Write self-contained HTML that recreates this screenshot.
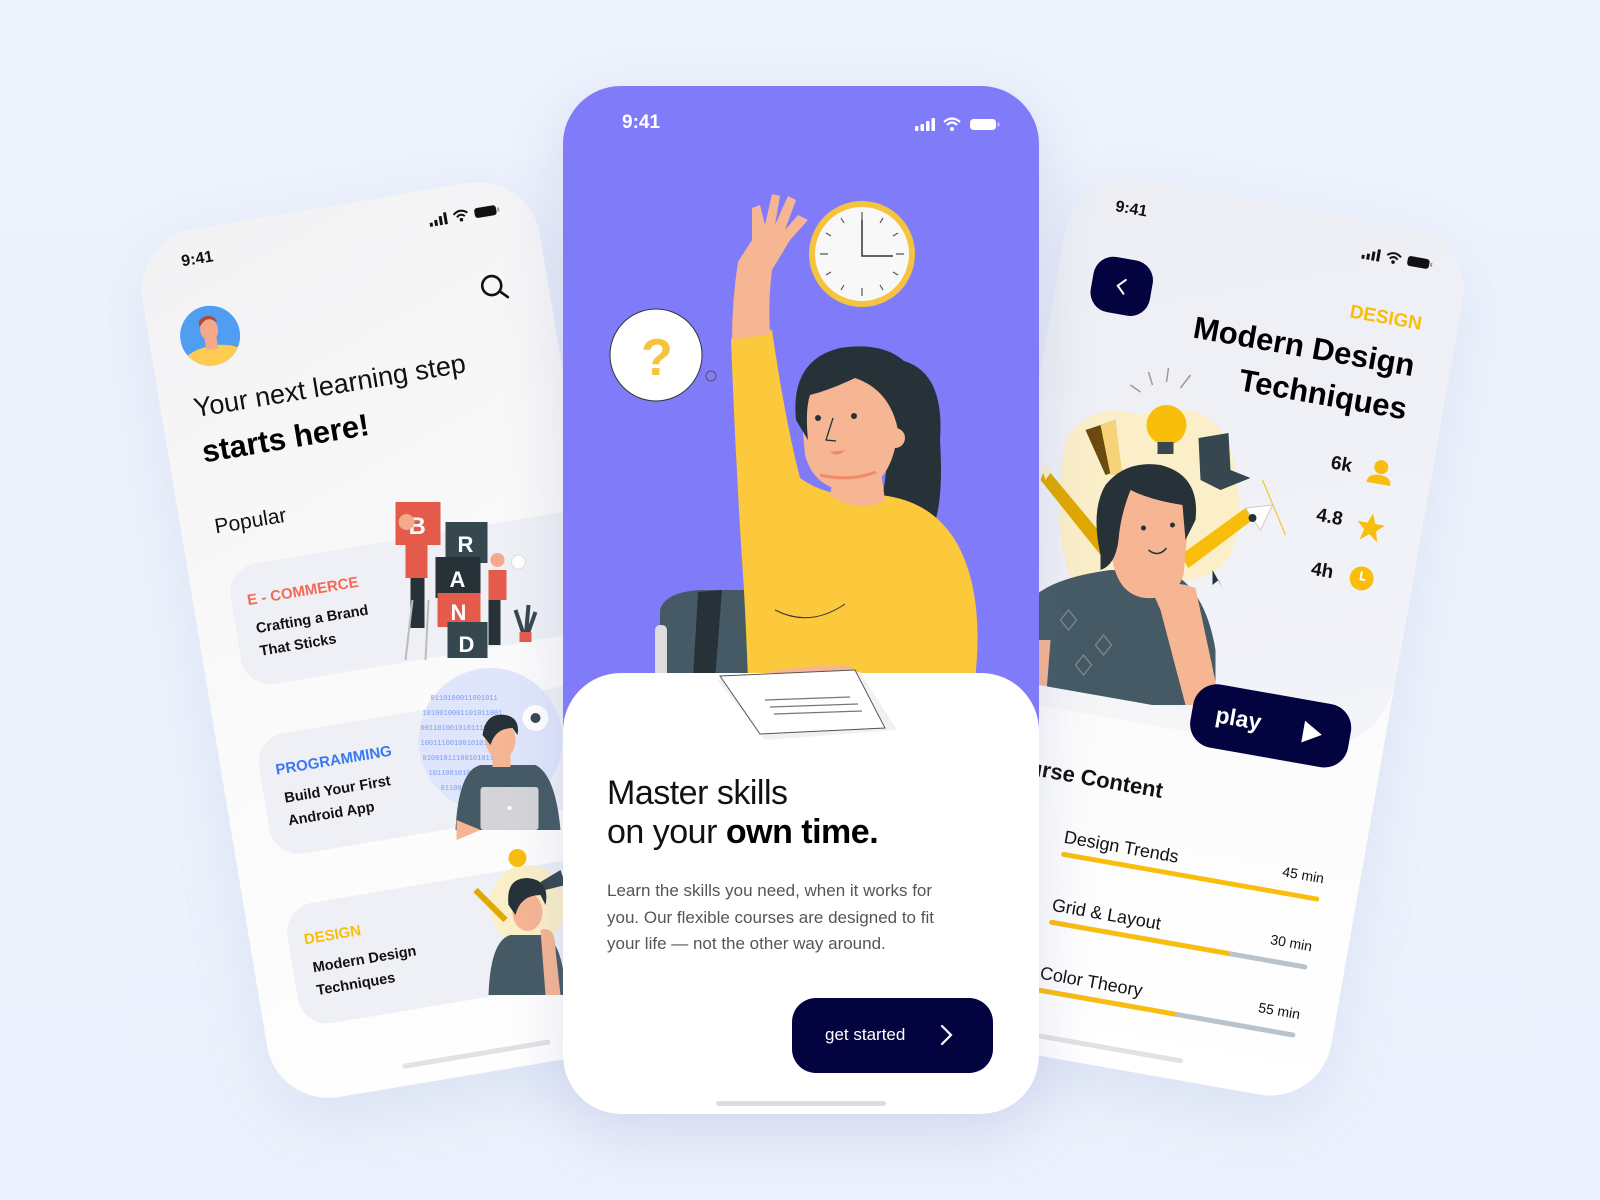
<!DOCTYPE html>
<html><head><meta charset="utf-8"><style>
*{margin:0;padding:0;box-sizing:border-box}
body{width:1600px;height:1200px;overflow:hidden;background:linear-gradient(180deg,#edf2fc 0%,#ebf1fc 100%);font-family:"Liberation Sans",sans-serif;position:relative}
.ph{position:absolute;width:403px;height:880px;border-radius:62px;overflow:hidden;box-shadow:0 20px 60px rgba(120,140,190,.15)}
.abs{position:absolute;white-space:nowrap;line-height:1}
.card{position:absolute;left:38px;width:380px;height:122px;border-radius:30px;background:#eef0f5}
.lab{position:absolute;left:16px;top:28px;font-size:15px;font-weight:bold;line-height:1}
.tt{position:absolute;left:20px;top:54px;font-size:14.5px;font-weight:bold;line-height:23px;color:#111}
.bar{position:absolute;left:104px;width:262px;height:5px;border-radius:3px;background:#b9c3cb;overflow:hidden}
.bar i{display:block;height:100%;background:#f9bd0c}
</style></head><body>

<!-- LEFT PHONE -->
<div class="ph" style="left:201.5px;top:200px;transform:rotate(-9.5deg);background:linear-gradient(160deg,#f2f2f4 0%,#fafafa 50%,#fff 100%)">
  <div class="abs" style="left:45px;top:23px;font-size:16px;font-weight:bold;color:#111">9:41</div>
  <svg class="abs" style="left:296px;top:24px" width="72" height="14" viewBox="0 0 72 14">
    <rect x="0" y="9" width="3" height="4" fill="#111"/><rect x="5" y="7" width="3" height="6" fill="#111"/><rect x="10" y="4" width="3" height="9" fill="#111"/><rect x="15" y="1" width="3" height="12" fill="#111"/>
    <path d="M25 5 Q32 -1 39 5 M28 8 Q32 4 36 8" stroke="#111" stroke-width="2" fill="none"/><circle cx="32" cy="11" r="1.8" fill="#111"/>
    <rect x="46" y="2" width="22" height="10" rx="3" fill="#111"/><rect x="69" y="5" width="2" height="4" fill="#999"/>
  </svg>
  <svg class="abs" style="left:31px;top:78px" width="60" height="60" viewBox="0 0 60 60">
    <clipPath id="av"><circle cx="30" cy="30" r="30"/></clipPath>
    <g clip-path="url(#av)"><rect width="60" height="60" fill="#4f9ef2"/><ellipse cx="30" cy="60" rx="36" ry="20" fill="#fccb4f"/>
    <rect x="24" y="30" width="12" height="14" fill="#f3a98a"/><ellipse cx="30" cy="24" rx="9" ry="11" fill="#f3a98a"/><path d="M21 20 Q30 8 39 18 L38 14 Q30 6 21 14Z" fill="#b5472f"/></g>
  </svg>
  <svg class="abs" style="left:334px;top:92px" width="30" height="30" viewBox="0 0 30 30"><circle cx="13" cy="13" r="9.5" stroke="#111" stroke-width="2.6" fill="none"/><path d="M20 20 L27 27" stroke="#111" stroke-width="2.6" stroke-linecap="round"/></svg>
  <div class="abs" style="left:33px;top:164px;font-size:27px;color:#111">Your next learning step</div>
  <div class="abs" style="left:34px;top:206px;font-size:31px;font-weight:bold;color:#000">starts here!</div>
  <div class="abs" style="left:34px;top:287px;font-size:21px;color:#111">Popular</div>
  <div class="card" style="top:340px"><div class="lab" style="color:#f26a58">E - COMMERCE</div><div class="tt">Crafting a Brand<br>That Sticks</div></div>
  <div class="card" style="top:512px"><div class="lab" style="color:#3a78f2">PROGRAMMING</div><div class="tt">Build Your First<br>Android App</div></div>
  <div class="card" style="top:684px"><div class="lab" style="color:#f9bd0c">DESIGN</div><div class="tt">Modern Design<br>Techniques</div></div>
  <div style="position:absolute;left:0;top:0;width:403px;height:880px;transform:rotate(9.5deg)">
    <svg width="403" height="880" viewBox="201.5 200 403 880" style="position:absolute;left:0;top:0">
      <rect x="395" y="502" width="45" height="43" fill="#e45b4b"/><text x="408" y="534" font-size="24" font-weight="bold" fill="#fff" font-family="Liberation Sans">B</text>
      <rect x="445" y="522" width="42" height="41" fill="#37474f"/><text x="457" y="552" font-size="22" font-weight="bold" fill="#fff" font-family="Liberation Sans">R</text>
      <rect x="435" y="557" width="45" height="41" fill="#263238"/><text x="449" y="587" font-size="22" font-weight="bold" fill="#fff" font-family="Liberation Sans">A</text>
      <rect x="437" y="593" width="43" height="34" fill="#e45b4b"/><text x="450" y="620" font-size="22" font-weight="bold" fill="#fff" font-family="Liberation Sans">N</text>
      <rect x="447" y="622" width="40" height="36" fill="#37474f"/><text x="458" y="652" font-size="22" font-weight="bold" fill="#fff" font-family="Liberation Sans">D</text>
      <rect x="405" y="538" width="22" height="40" fill="#e45b4b"/><rect x="410" y="578" width="14" height="50" fill="#263238"/><circle cx="406" cy="522" r="8" fill="#f3a98a"/>
      <path d="M412 600 L405 660 M428 600 L425 660" stroke="#bbb" stroke-width="2"/>
      <rect x="488" y="570" width="18" height="30" fill="#e45b4b"/><rect x="488" y="600" width="12" height="45" fill="#263238"/><circle cx="497" cy="560" r="7" fill="#f3a98a"/>
      <circle cx="518" cy="562" r="7" fill="#fff" stroke="#ddd"/>
      <path d="M525 640 L515 610 M525 640 L528 605 M525 640 L535 612" stroke="#37474f" stroke-width="4"/><rect x="519" y="632" width="12" height="10" fill="#e45b4b"/>
      <circle cx="490" cy="740" r="72" fill="#dfe6fb"/>
      <g font-size="7" fill="#7a9cf0" font-family="Liberation Mono"><text x="430" y="700">0110100011001011</text><text x="422" y="715">1010010001101011001</text><text x="420" y="730">00110100101011100101</text><text x="420" y="745">10011100100101010011</text><text x="422" y="760">0100101110010101101</text><text x="428" y="775">101100101001011001</text><text x="440" y="790">0110010100110</text></g>
      <circle cx="535" cy="718" r="13" fill="#fff"/><circle cx="535" cy="718" r="5" fill="#37474f"/>
      <path d="M455 830 Q458 770 480 765 L535 765 Q555 775 560 830Z" fill="#455a64"/>
      <rect x="492" y="745" width="18" height="22" fill="#f6b593"/><ellipse cx="500" cy="740" rx="15" ry="19" fill="#f6b593"/><path d="M482 735 Q485 712 505 715 Q520 718 517 735 L512 728 Q495 728 490 745Z" fill="#263238"/>
      <rect x="480" y="787" width="58" height="43" rx="3" fill="#d4d4d8"/><circle cx="509" cy="808" r="2" fill="#fff"/>
      <path d="M456 820 L480 830 L456 840Z" fill="#f6b593"/>
      <ellipse cx="527" cy="905" rx="38" ry="40" fill="#fbefc9"/><circle cx="517" cy="858" r="9" fill="#f9bd0c"/>
      <path d="M475 890 L505 920" stroke="#e0a800" stroke-width="6"/>
      <path d="M540 882 L560 870 L565 885 L545 890Z" fill="#37474f"/>
      <path d="M488 995 Q490 940 510 935 L545 935 Q563 945 565 995Z" fill="#455a64"/>
      <ellipse cx="527" cy="912" rx="15" ry="19" fill="#f6b593"/><path d="M508 905 Q505 878 527 878 Q550 880 545 905 L540 895 Q520 895 515 915Z" fill="#263238"/>
      <path d="M540 930 Q555 925 555 950 L560 995 L545 995Z" fill="#f6b593"/>
    </svg>
  </div>
  <div style="position:absolute;left:130px;top:858px;width:150px;height:5px;border-radius:3px;background:#e2e2e4"></div>
</div>

<!-- RIGHT PHONE -->
<div class="ph" style="left:996.5px;top:197px;transform:rotate(10deg);background:linear-gradient(180deg,#f6f6f8,#fff)">
  <div style="position:absolute;left:0;top:0;width:403px;height:530px;background:linear-gradient(160deg,#eceef4,#f3f4f9);border-bottom-right-radius:80px"></div>
  <div style="position:absolute;left:0;top:0;width:403px;height:880px;transform:rotate(-10deg)">
    <svg width="403" height="880" viewBox="996.5 197 403 880" style="position:absolute;left:0;top:0">
      <path d="M1065 440 Q1090 400 1140 415 Q1200 395 1228 440 Q1245 500 1235 540 Q1225 580 1180 580 L1070 580 Q1050 520 1065 440Z" fill="#fbefc9"/>
      <path d="M1152 385 L1148 372 M1166 382 L1168 368 M1180 388 L1190 375 M1140 392 L1130 385" stroke="#999" stroke-width="1.5"/>
      <circle cx="1166" cy="425" r="20" fill="#f9bd0c"/><rect x="1157" y="442" width="16" height="12" fill="#37474f"/>
      <path d="M1085 430 L1115 420 L1120 470 L1105 475Z" fill="#6b4b10"/><path d="M1100 425 L1115 420 L1122 475 L1110 475Z" fill="#f6d37a"/>
      <path d="M1198 438 L1228 433 L1230 470 L1250 478 L1220 490 L1200 480Z" fill="#37474f"/>
      <path d="M1045 467 L1110 545 L1100 555 L1040 480Z" fill="#e0a800"/><path d="M1040 465 L1052 470 L1045 480Z" fill="#fbefc9"/>
      <path d="M1180 555 L1245 508 L1252 520 L1188 568Z" fill="#f9bd0c"/><path d="M1245 508 L1272 505 L1260 530Z" fill="#fff" stroke="#ccc"/><circle cx="1252" cy="518" r="4" fill="#263238"/>
      <path d="M1262 480 L1285 535" stroke="#f9bd0c" stroke-width="1"/>
      <path d="M1212 570 L1212 585 L1218 580 L1222 588 Z" fill="#263238"/>
      <path d="M1030 705 L1030 600 Q1050 578 1110 570 L1170 572 Q1205 590 1215 650 L1215 705Z" fill="#455a64"/>
      <path d="M1060 620 l8 -10 l8 10 l-8 10z M1095 645 l8 -10 l8 10 l-8 10z M1075 665 l8 -10 l8 10 l-8 10z M1180 620 l8 -10 l8 10 l-8 10z" stroke="#7a8b93" fill="none" stroke-width="1.3"/>
      <rect x="1130" y="560" width="30" height="30" fill="#f6b593"/>
      <path d="M1108 495 Q1110 480 1150 482 Q1190 486 1188 520 L1183 575 Q1175 600 1145 598 Q1118 595 1112 560Z" fill="#f6b593"/>
      <path d="M1100 555 Q1090 510 1105 485 Q1125 460 1160 465 Q1200 475 1195 520 L1185 540 L1182 505 Q1150 500 1130 490 Q1120 515 1118 540 Q1115 565 1100 570Z" fill="#263238"/>
      <circle cx="1143" cy="528" r="2.5" fill="#263238"/><circle cx="1172" cy="525" r="2.5" fill="#263238"/>
      <path d="M1148 550 Q1158 558 1166 548" stroke="#263238" stroke-width="1.5" fill="none"/>
      <path d="M1152 592 Q1170 578 1195 588 L1220 705 L1185 705 L1160 610Z" fill="#f6b593"/>
      <path d="M1030 640 L1050 640 L1045 705 L1030 705Z" fill="#f6b593"/>
    </svg>
  </div>
  <div style="position:absolute;left:0;top:515px;width:300px;height:20px;background:#f6f6f8"></div>
  <div class="abs" style="left:45px;top:23px;font-size:16px;font-weight:bold;color:#111">9:41</div>
  <svg class="abs" style="left:296px;top:26px" width="72" height="14" viewBox="0 0 72 14">
    <rect x="0" y="9" width="3" height="4" fill="#111"/><rect x="5" y="7" width="3" height="6" fill="#111"/><rect x="10" y="4" width="3" height="9" fill="#111"/><rect x="15" y="1" width="3" height="12" fill="#111"/>
    <path d="M25 5 Q32 -1 39 5 M28 8 Q32 4 36 8" stroke="#111" stroke-width="2" fill="none"/><circle cx="32" cy="11" r="1.8" fill="#111"/>
    <rect x="46" y="2" width="22" height="10" rx="3" fill="#111"/><rect x="69" y="5" width="2" height="4" fill="#999"/>
  </svg>
  <div style="position:absolute;left:35px;top:80px;width:60px;height:56px;border-radius:20px;background:#03033f"></div>
  <svg class="abs" style="left:55px;top:97px" width="20" height="22" viewBox="0 0 20 22"><path d="M13 4 L6 11 L13 18" stroke="#fff" stroke-width="2" fill="none" stroke-linecap="round"/></svg>
  <div class="abs" style="right:36px;top:84px;font-size:19px;font-weight:bold;color:#f9bd0c">DESIGN</div>
  <div class="abs" style="right:36px;top:114px;font-size:31px;font-weight:bold;color:#000;text-align:right;line-height:44px">Modern Design<br>Techniques</div>
  <div class="abs" style="right:80px;top:236px;font-size:19px;font-weight:bold;color:#111">6k</div>
  <div class="abs" style="right:80px;top:290px;font-size:19px;font-weight:bold;color:#111">4.8</div>
  <div class="abs" style="right:80px;top:344px;font-size:19px;font-weight:bold;color:#111">4h</div>
  <svg class="abs" style="left:336px;top:230px" width="32" height="140" viewBox="0 0 32 140">
    <circle cx="16" cy="11" r="7" fill="#f9bd0c"/><path d="M4 28 Q4 19 16 19 Q28 19 28 28Z" fill="#f9bd0c"/>
    <path d="M16 58 L20 68 L30 68 L22 75 L25 86 L16 79 L7 86 L10 75 L2 68 L12 68Z" fill="#f9bd0c"/>
    <circle cx="16" cy="124" r="12" fill="#f9bd0c"/><path d="M15 117 L15 125 L20 125" stroke="#fff" stroke-width="2" fill="none"/>
  </svg>
  <div style="position:absolute;left:208px;top:483px;width:160px;height:64px;border-radius:24px;background:#03033f"></div>
  <div class="abs" style="left:232px;top:502px;font-size:23px;font-weight:bold;color:#fff">play</div>
  <svg class="abs" style="left:318px;top:502px" width="24" height="26" viewBox="0 0 24 26"><path d="M3 2 L22 13 L3 24Z" fill="#fff"/></svg>
  <div class="abs" style="left:28px;top:587px;font-size:22px;font-weight:bold;color:#111">Course Content</div>
  <div style="position:absolute;left:46px;top:646px;width:32px;height:32px;border-radius:50%;background:#03033f"></div>
  <div style="position:absolute;left:46px;top:715px;width:32px;height:32px;border-radius:50%;background:#03033f"></div>
  <div style="position:absolute;left:46px;top:784px;width:32px;height:32px;border-radius:50%;background:#03033f"></div>
  <div class="abs" style="left:104px;top:651px;font-size:18px;color:#111">Design Trends</div>
  <div class="abs" style="left:104px;top:720px;font-size:18px;color:#111">Grid &amp; Layout</div>
  <div class="abs" style="left:104px;top:789px;font-size:18px;color:#111">Color Theory</div>
  <div class="abs" style="right:36px;top:649px;font-size:14px;color:#111">45 min</div>
  <div class="abs" style="right:36px;top:718px;font-size:14px;color:#111">30 min</div>
  <div class="abs" style="right:36px;top:787px;font-size:14px;color:#111">55 min</div>
  <div class="bar" style="top:675px"><i style="width:100%"></i></div>
  <div class="bar" style="top:744px"><i style="width:70%"></i></div>
  <div class="bar" style="top:813px"><i style="width:54%"></i></div>
  <div style="position:absolute;left:110px;top:858px;width:150px;height:5px;border-radius:3px;background:#e2e2e4"></div>
</div>

<!-- CENTER PHONE -->
<div style="position:absolute;left:563px;top:86px;width:476px;height:1028px;border-radius:58px;overflow:hidden;background:#807bf9;box-shadow:0 20px 60px rgba(100,110,180,.18)">
  <svg width="476" height="1028" viewBox="563 86 476 1028" style="position:absolute;left:0;top:0">
    <circle cx="862" cy="254" r="53" fill="#f6c33f"/><circle cx="862" cy="254" r="47" fill="#f8f8f8"/>
    <g stroke="#555" stroke-width="1.2"><path d="M862 212 V220 M862 288 V296 M820 254 H828 M896 254 H904 M883 218 L880 223 M841 218 L844 223 M883 290 L880 285 M841 290 L844 285 M898 233 L893 236 M826 233 L831 236 M898 275 L893 272 M826 275 L831 272"/></g>
    <path d="M862 220 V256 H893" stroke="#333" stroke-width="1.5" fill="none"/>
    <circle cx="656" cy="355" r="46" fill="#fff" stroke="#333" stroke-width="1"/>
    <text x="641" y="375" font-size="52" font-weight="bold" fill="#f6c33f" font-family="Liberation Sans">?</text>
    <circle cx="711" cy="376" r="5" fill="none" stroke="#555" stroke-width="1"/>
    <path d="M660 680 L660 610 Q665 592 700 590 L752 590 L752 680Z" fill="#455a64"/><path d="M693 680 L698 592 L722 590 L715 680Z" fill="#263238"/>
    <rect x="655" y="625" width="12" height="60" rx="5" fill="#ddd"/>
    <path d="M900 360 Q945 370 940 440 Q945 520 925 540 L880 520Z" fill="#263238"/>
    <path d="M731 338 L772 330 Q785 420 800 478 Q830 500 880 495 Q930 500 955 540 Q985 590 975 680 L748 680 Q745 600 742 560 Q735 450 731 338Z" fill="#fbc93b"/>
    <path d="M775 610 Q810 628 845 604" stroke="#333" stroke-width="1" fill="none"/>
    <path d="M732 340 L770 334 Q768 300 772 270 L790 240 L808 220 L798 215 L785 230 L796 200 L788 196 L775 225 L780 196 L772 194 L765 225 L760 205 L752 208 L752 240 L738 262 Q732 300 732 340Z" fill="#f6b593"/>
    <path d="M835 470 L880 465 L885 500 Q860 515 830 495Z" fill="#f6b593"/>
    <path d="M800 400 Q800 360 850 358 Q895 362 898 410 Q900 480 858 492 Q815 492 805 455Z" fill="#f6b593"/>
    <path d="M796 420 Q790 360 840 348 Q890 340 912 370 Q925 400 905 440 L898 430 Q890 390 855 378 Q830 390 810 395 Q805 410 808 440Z" fill="#263238"/>
    <circle cx="895" cy="438" r="10" fill="#f6b593"/>
    <circle cx="818" cy="418" r="3" fill="#263238"/><circle cx="854" cy="416" r="3" fill="#263238"/>
    <path d="M833 418 L826 440 L836 441" stroke="#263238" stroke-width="1.3" fill="none"/>
    <path d="M830 452 Q838 458 845 450" fill="#f08a6a"/>
    <path d="M820 475 Q850 482 876 472" stroke="#f08a6a" stroke-width="3" fill="none"/>
    <path d="M750 680 Q770 666 850 665 L860 680Z" fill="#f6b593"/>
    <path d="M850 668 L945 660 L960 680 L850 680Z" fill="#fbc93b"/>
  </svg>
  <div style="position:absolute;left:0;top:587px;width:476px;height:460px;background:#fff;border-radius:58px 58px 0 0"></div>
  <svg width="476" height="1028" viewBox="563 86 476 1028" style="position:absolute;left:0;top:0">
    <path d="M717 680 L860 672 L897 730 L765 740Z" fill="#f1f1f1"/>
    <path d="M720 676 L855 670 L885 728 L760 734Z" fill="#fff" stroke="#555" stroke-width="1"/>
    <path d="M765 700 L850 697 M770 707 L858 704 M774 714 L862 711" stroke="#777" stroke-width="1.3"/>
  </svg>
  <div class="abs" style="left:59px;top:27px;font-size:19px;font-weight:bold;color:#fff">9:41</div>
  <svg class="abs" style="left:352px;top:30px" width="92" height="16" viewBox="0 0 92 16">
    <rect x="0" y="10" width="3.5" height="5" rx="1" fill="#fff"/><rect x="5.5" y="8" width="3.5" height="7" rx="1" fill="#fff"/><rect x="11" y="5" width="3.5" height="10" rx="1" fill="#fff"/><rect x="16.5" y="2" width="3.5" height="13" rx="1" fill="#fff"/>
    <path d="M29 6 Q37 -1 45 6 M32 9 Q37 4 42 9" stroke="#fff" stroke-width="2.2" fill="none"/><circle cx="37" cy="13" r="2" fill="#fff"/>
    <rect x="55" y="3" width="26" height="11" rx="3.5" fill="#fff"/><rect x="82.5" y="6.5" width="2" height="4" rx="1" fill="#fff" opacity=".6"/>
  </svg>
  <div class="abs" style="left:44px;top:690px;font-size:34px;color:#111;letter-spacing:-.5px">Master skills</div>
  <div class="abs" style="left:44px;top:729px;font-size:34px;color:#111;letter-spacing:-.5px">on your <b style="color:#000">own time.</b></div>
  <div class="abs" style="left:44px;top:792px;font-size:17px;color:#555;line-height:26.5px">Learn the skills you need, when it works for<br>you. Our flexible courses are designed to fit<br>your life — not the other way around.</div>
  <div style="position:absolute;left:229px;top:912px;width:201px;height:75px;border-radius:24px;background:#03033f"></div>
  <div class="abs" style="left:262px;top:940px;font-size:17px;color:#fff">get started</div>
  <svg class="abs" style="left:375px;top:938px" width="16" height="22" viewBox="0 0 16 22"><path d="M4 2 L13 11 L4 20" stroke="#fff" stroke-width="2.2" fill="none" stroke-linecap="round"/></svg>
  <div style="position:absolute;left:153px;top:1015px;width:170px;height:5px;border-radius:3px;background:#dcdcdc"></div>
</div>
</body></html>
